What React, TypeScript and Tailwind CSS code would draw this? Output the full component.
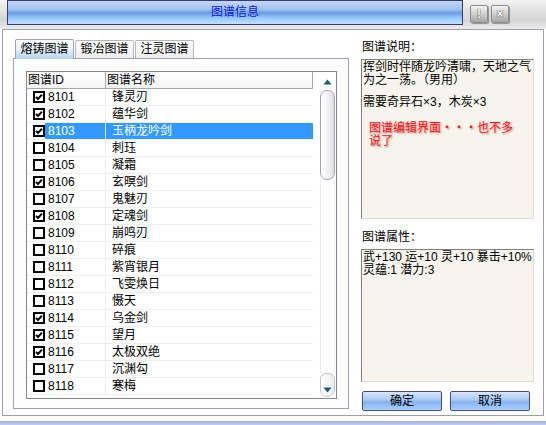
import React from "react";

type Recipe = { id: string; name: string; checked: boolean };

const recipes: Recipe[] = [
  { id: "8101", name: "锋灵刃", checked: true },
  { id: "8102", name: "蕴华剑", checked: true },
  { id: "8103", name: "玉柄龙吟剑", checked: true },
  { id: "8104", name: "刺珏", checked: false },
  { id: "8105", name: "凝霜", checked: false },
  { id: "8106", name: "玄暝剑", checked: true },
  { id: "8107", name: "鬼魅刃", checked: false },
  { id: "8108", name: "定魂剑", checked: true },
  { id: "8109", name: "崩鸣刃", checked: false },
  { id: "8110", name: "碎痕", checked: false },
  { id: "8111", name: "紫宵银月", checked: false },
  { id: "8112", name: "飞雯焕日", checked: false },
  { id: "8113", name: "慑天", checked: false },
  { id: "8114", name: "乌金剑", checked: true },
  { id: "8115", name: "望月", checked: true },
  { id: "8116", name: "太极双绝", checked: true },
  { id: "8117", name: "沉渊勾", checked: false },
  { id: "8118", name: "寒梅", checked: false },
];

const SELECTED = "8103";

const CheckBox = ({ checked }: { checked: boolean }) => (
  <svg width="12" height="12" viewBox="0 0 12 12" className="shrink-0">
    <rect x="1" y="1" width="10" height="10" fill="#fff" stroke="#000" strokeWidth="2" />
    {checked && (
      <path d="M3 5.8 L5 8 L9 3.6" fill="none" stroke="#000" strokeWidth="2" />
    )}
  </svg>
);

const WinButton = ({ label }: { label: string }) => (
  <div className="w-[18px] h-[18px] rounded-[2px] border border-[#8c8c8c] bg-[linear-gradient(to_bottom,#f4f4f4,#c8c8c8_60%,#a4a4a4)] shadow-[1px_1px_1px_rgba(0,0,0,0.35)] flex items-center justify-center text-[12px] font-bold leading-none text-white [text-shadow:0_0_1px_#333,0_0_1px_#333]">
    {label}
  </div>
);

const Tab = ({ label, active }: { label: string; active?: boolean }) => (
  <div
    className={
      active
        ? "h-[20px] w-[59px] -mb-px z-10 border border-b-0 border-[#a4a4b4] rounded-t-[2px] bg-[linear-gradient(to_bottom,#ffffff,#e8f0fa_50%,#b6d2ee)] flex items-center justify-center"
        : "h-[18px] w-[59px] border border-b-0 border-[#b4b4bc] rounded-t-[2px] bg-[linear-gradient(to_bottom,#ffffff,#ececec)] flex items-center justify-center"
    }
  >
    {label}
  </div>
);

const Row = ({ r }: { r: Recipe }) => {
  const sel = r.id === SELECTED;
  return (
    <div className="h-[17px] flex items-center border-b border-[#f0f0f0]">
      <div className="w-[6px] shrink-0" />
      <CheckBox checked={r.checked} />
      <div
        className={
          "flex-1 h-full flex items-center " +
          (sel ? "bg-[#3399ff] text-white" : "")
        }
      >
        <div className="w-[61px] pl-[3px] h-full flex items-center border-r border-[#f0f0f0]">
          {r.id}
        </div>
        <div className="pl-[6px]">{r.name}</div>
      </div>
    </div>
  );
};

const ScrollBar = () => (
  <div className="w-[17px] h-full flex flex-col items-center py-[1px]">
    <div className="w-[15px] h-[17px] flex items-center justify-center">
      <svg width="9" height="6" viewBox="0 0 9 6">
        <path d="M0.5 5.5 L4.5 0.5 L8.5 5.5 Z" fill="#1d5a78" />
      </svg>
    </div>
    <div className="w-[15px] h-[90px] rounded-[7px] border border-[#a4a4b0] bg-[linear-gradient(to_right,#ffffff,#f2f2f6_50%,#dcdce4)]" />
    <div className="flex-1 w-[15px] border-x border-[#ececf0]" />
    <div className="w-[15px] h-[24px] rounded-b-[7px] rounded-t-[6px] border border-[#c4c4cc] bg-[linear-gradient(to_right,#ffffff,#ececf0)] flex items-end justify-center pb-[3px]">
      <svg width="9" height="6" viewBox="0 0 9 6">
        <path d="M0.5 0.5 L4.5 5.5 L8.5 0.5 Z" fill="#1d5a78" />
      </svg>
    </div>
  </div>
);

const BlueButton = ({ label }: { label: string }) => (
  <div className="w-[80px] h-[20px] rounded-[2px] border border-[#4a4a7c] bg-[linear-gradient(to_bottom,#d6e6fa,#a8c8f4_45%,#86b2ee_55%,#a8d0ff)] flex items-center justify-center text-black">
    {label}
  </div>
);

export default function App() {
  return (
    <div className="w-[546px] h-[425px] overflow-hidden bg-white flex flex-col text-[12px] leading-[13px] text-black font-['Liberation_Sans','Noto_Sans_CJK_SC',sans-serif]">
      {/* caption */}
      <div className="h-[29px] shrink-0 flex items-start bg-[linear-gradient(to_bottom,#f2f2f2,#d4d4d4_70%,#ececec)]">
        <div className="ml-[7px] w-[456px] h-[25px] border border-[#3a3a70] bg-[linear-gradient(to_bottom,#c2d6f2,#a4c4f0_35%,#6c9ce2_52%,#94c6ff_72%,#c0e2ff)] flex items-center justify-center text-[12px] text-[#1020c8]">
          图谱信息
        </div>
        <div className="ml-[7px] mt-[5px] flex gap-[3px]">
          <WinButton label="!" />
          <WinButton label="×" />
        </div>
      </div>

      {/* body */}
      <div className="h-[387px] shrink-0 mx-[2px] border border-[#9c9cb6] bg-white flex pl-[10px] pt-[7px]">
        {/* left: tabs */}
        <div className="w-[336px] flex flex-col">
          <div className="h-[21px] flex items-end gap-[1px] pl-[2px]">
            <Tab label="熔铸图谱" active />
            <Tab label="锻冶图谱" />
            <Tab label="注灵图谱" />
          </div>
          <div className="h-[351px] border border-[#a0a0b0] bg-[#fdfdfd] pl-[12px] pt-[12px]">
            <div className="w-[311px] h-[328px] border border-[#828790] bg-white flex">
              <div className="w-[286px] flex flex-col">
                <div className="h-[17px] flex border-b border-[#a8a8b0] border-r bg-[linear-gradient(to_bottom,#ffffff,#f4f4f6)]">
                  <div className="w-[79px] pl-[1px] flex items-center border-r border-[#a8a8b0]">图谱ID</div>
                  <div className="pl-[1px] flex items-center">图谱名称</div>
                </div>
                {recipes.map((r) => (
                  <Row key={r.id} r={r} />
                ))}
              </div>
              <div className="flex-1" />
              <ScrollBar />
            </div>
          </div>
        </div>

        {/* right: description */}
        <div className="ml-[12px] w-[173px] flex flex-col pt-[4px]">
          <div className="h-[18px] pl-[1px] flex items-start">图谱说明：</div>
          <div className="h-[160px] border border-[#7f7f7f] border-r-[#dcdcdc] border-b-[#dcdcdc] bg-[#f6f4ec] pt-[1px] pl-[1px]">
            <div>挥剑时伴随龙吟清啸，天地之气</div>
            <div>为之一荡。（男用）</div>
            <div className="h-[9px]" />
            <div>需要奇异石×3，木炭×3</div>
            <div className="mt-[13px] pl-[6px] text-[#f01818] [text-shadow:1px_1px_2px_rgba(160,40,40,0.6)]">
              <div>图谱编辑界面・・・也不多</div>
              <div>说了</div>
            </div>
          </div>
          <div className="h-[30px] pl-[1px] pt-[12px]">图谱属性：</div>
          <div className="h-[133px] border border-[#7f7f7f] border-r-[#dcdcdc] border-b-[#dcdcdc] bg-[#f6f4ec] pt-[1px] pl-[1px]">
            <div>武+130 运+10 灵+10 暴击+10%</div>
            <div>灵蕴:1 潜力:3</div>
          </div>
          <div className="mt-[9px] flex gap-[8px] pl-[1px]">
            <BlueButton label="确定" />
            <BlueButton label="取消" />
          </div>
        </div>
      </div>

      {/* bottom edge */}
      <div className="h-[5px] shrink-0" />
      <div className="flex-1 bg-[linear-gradient(to_bottom,#9cb0e8,#c8c8f0)]" />
    </div>
  );
}
